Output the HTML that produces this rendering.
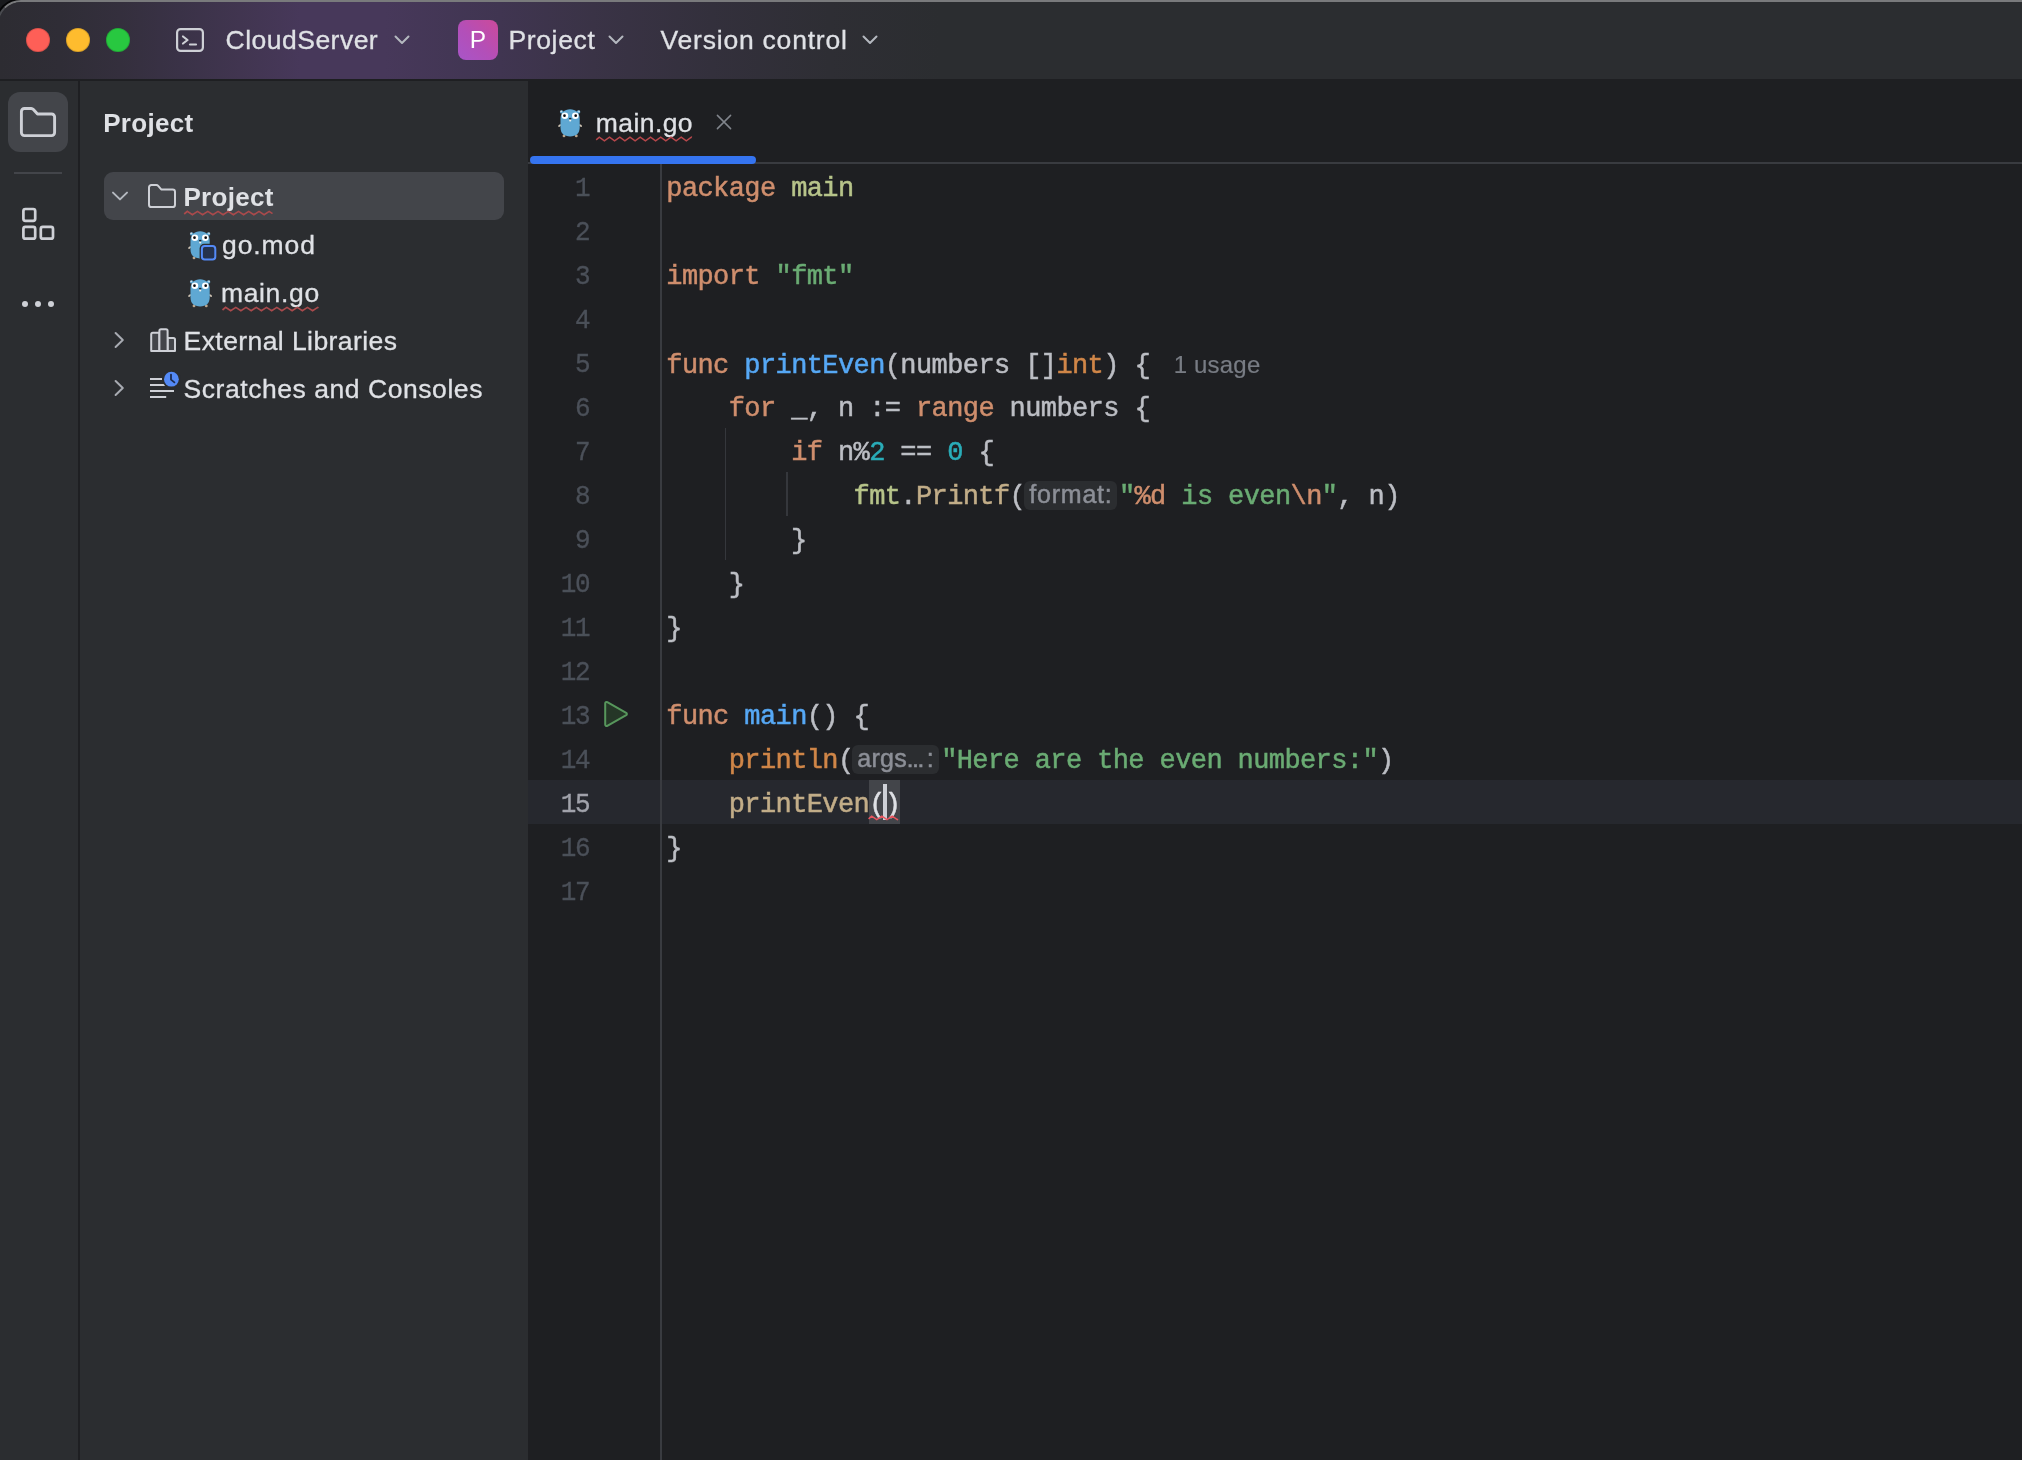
<!DOCTYPE html>
<html lang="en">
<head>
<meta charset="utf-8">
<title>main.go – CloudServer</title>
<style>
*{box-sizing:border-box;margin:0;padding:0}
html,body{width:2022px;height:1460px;overflow:hidden;background:#191a1d}
body{position:relative;font-family:"Liberation Sans",sans-serif;color:#dfe1e5;-webkit-font-smoothing:antialiased}
.abs{position:absolute}
#win{position:absolute;left:-3px;top:0;width:2030px;height:1470px;border:2px solid #797a7c;border-left-color:#4a4b50;border-radius:24px 0 0 0;background:#2b2d30;overflow:hidden;box-shadow:0 0 0 2px #050506}
#inner{position:absolute;left:1px;top:-2px;width:2022px;height:1460px;will-change:transform}
/* title bar */
#title{position:absolute;left:0;top:0;width:2022px;height:79px;background:linear-gradient(90deg,#2d2c32 0px,#2f2d36 60px,#342f3d 120px,#3a3247 180px,#413550 240px,#47385a 300px,#47385a 385px,#403551 500px,#3a3346 593px,#33303c 712px,#2e2e34 830px,#2b2d30 940px,#2b2d30 100%)}
#titleline{position:absolute;left:0;top:79px;width:2022px;height:2px;background:#1e1f22}
.tl{position:absolute;top:28px;width:24px;height:24px;border-radius:50%;box-shadow:inset 0 0 0 1px rgba(0,0,0,.14)}
.tt{position:absolute;top:0;height:80px;line-height:80px;font-size:26.5px;-webkit-text-stroke:0.3px;color:#dfe1e5;white-space:nowrap}
/* left stripe */
#stripe{position:absolute;left:0;top:81px;width:79px;height:1379px;background:#2b2d30}
#stripeline{position:absolute;left:78px;top:81px;width:2px;height:1379px;background:#1e1f22}
#panel{position:absolute;left:80px;top:81px;width:448px;height:1379px;background:#2b2d30}
#editor{position:absolute;left:528px;top:81px;width:1494px;height:1379px;background:#1e1f22}
.row{position:absolute;left:0;height:48px;line-height:48px;font-size:26.5px;-webkit-text-stroke:0.3px;white-space:nowrap;color:#dfe1e5}
.wavy{position:absolute;height:6px}
/* code */
.ln{position:absolute;left:528px;width:61.4px;text-align:right;height:44px;line-height:44px;font-family:"Liberation Mono",monospace;font-size:26px;letter-spacing:-1.3px;-webkit-text-stroke:0.3px;color:#4b5059;transform:scaleY(1.08);transform-origin:50% 73%}
.cl{position:absolute;left:666.3px;height:44px;line-height:44px;font-family:"Liberation Mono",monospace;font-size:27px;letter-spacing:-0.6px;color:#bcbec4;white-space:pre;-webkit-text-stroke:0.5px}
.k{color:#cf8e6d}.f{color:#56a8f5}.s{color:#6aab73}.n{color:#2aacb8}.p{color:#b7c48a}.c{color:#c2ad88}.b{color:#d08648}
.hint{display:inline-block;vertical-align:top;height:28.5px;margin-top:6.5px;line-height:27px;border-radius:6px;background:#2b2d30;color:#8c8f97;font-family:"Liberation Sans",sans-serif;font-size:25px;letter-spacing:0.8px;text-indent:0.8px;text-align:center;white-space:nowrap}
.usage{font-family:"Liberation Sans",sans-serif;font-size:24px;color:#787c84;margin-left:23.6px;letter-spacing:0.2px;-webkit-text-stroke:0.2px}
</style>
</head>
<body>
<div id="win"><div id="inner">

<div id="title"></div>
<div id="titleline"></div>
<div class="tl" style="left:26px;background:#fe5f57"></div>
<div class="tl" style="left:66px;background:#febc2e"></div>
<div class="tl" style="left:106px;background:#28c840"></div>

<!-- terminal icon -->
<svg class="abs" style="left:174px;top:26px" width="32" height="28" viewBox="0 0 32 28" fill="none" stroke="#ced0d6" stroke-width="2.2" stroke-linecap="round" stroke-linejoin="round">
<rect x="3.1" y="3.1" width="25.8" height="21.8" rx="3.5"/>
<path d="M9 10.5 L13.5 14 L9 17.5"/><path d="M16 18.5 H22"/>
</svg>
<div class="tt" id="t1" style="left:225.6px;letter-spacing:0.48px">CloudServer</div>
<svg class="abs chev" style="left:392px;top:32px" width="20" height="16" viewBox="0 0 20 16" fill="none" stroke="#b4b8bf" stroke-width="2" stroke-linecap="round" stroke-linejoin="round"><path d="M3.5 4.5 L10 11 L16.5 4.5"/></svg>

<div class="abs" style="left:458px;top:20px;width:40px;height:40px;border-radius:8px;background:linear-gradient(45deg,#a855c8 0%,#b34fb8 45%,#cc4a9a 100%);color:#fff;font-size:24.5px;line-height:40px;text-align:center">P</div>
<div class="tt" id="t2" style="left:508.4px;letter-spacing:0.66px">Project</div>
<svg class="abs chev" style="left:606px;top:32px" width="20" height="16" viewBox="0 0 20 16" fill="none" stroke="#b4b8bf" stroke-width="2" stroke-linecap="round" stroke-linejoin="round"><path d="M3.5 4.5 L10 11 L16.5 4.5"/></svg>
<div class="tt" id="t3" style="left:660.6px;letter-spacing:0.78px">Version control</div>
<svg class="abs chev" style="left:860px;top:32px" width="20" height="16" viewBox="0 0 20 16" fill="none" stroke="#b4b8bf" stroke-width="2" stroke-linecap="round" stroke-linejoin="round"><path d="M3.5 4.5 L10 11 L16.5 4.5"/></svg>

<div id="stripe"></div>
<div id="stripeline"></div>
<div id="panel"></div>
<div id="editor"></div>

<!-- STRIPE-ICONS -->
<div class="abs" style="left:8px;top:92px;width:60px;height:60px;border-radius:12px;background:#43454a"></div>
<svg class="abs" style="left:18px;top:104px" width="40" height="36" viewBox="0 0 40 36" fill="none" stroke="#ced0d6" stroke-width="2.9" stroke-linejoin="round" stroke-linecap="round">
<path d="M3.4 7.5 a3 3 0 0 1 3 -3 H13.2 a3 3 0 0 1 2.2 1 L19.5 10 H33.6 a3 3 0 0 1 3 3 V28.6 a3 3 0 0 1 -3 3 H6.4 a3 3 0 0 1 -3 -3 Z"/>
</svg>
<div class="abs" style="left:14px;top:172px;width:48px;height:2px;background:#43454a"></div>
<svg class="abs" style="left:18px;top:204px" width="40" height="40" viewBox="0 0 40 40" fill="none" stroke="#ced0d6" stroke-width="2.7" stroke-linejoin="round">
<rect x="5.4" y="5" width="11.8" height="11.8" rx="2"/>
<rect x="5.4" y="22.9" width="11.8" height="11.8" rx="2"/>
<rect x="22.8" y="22.9" width="12.2" height="11.8" rx="2"/>
</svg>
<div class="abs" style="left:22px;top:301px;width:6px;height:6px;border-radius:50%;background:#ced0d6"></div>
<div class="abs" style="left:35px;top:301px;width:6px;height:6px;border-radius:50%;background:#ced0d6"></div>
<div class="abs" style="left:48px;top:301px;width:6px;height:6px;border-radius:50%;background:#ced0d6"></div>
<!-- PANEL -->
<svg width="0" height="0" style="position:absolute"><defs>
<g id="gopher">
<ellipse cx="4.7" cy="3.9" rx="1.8" ry="1.7" fill="#5fa8d3"/><ellipse cx="21.5" cy="3.9" rx="1.8" ry="1.7" fill="#5fa8d3"/>
<ellipse cx="4.2" cy="3.4" rx="0.9" ry="0.8" fill="#d5dde2"/><ellipse cx="22" cy="3.4" rx="0.9" ry="0.8" fill="#d5dde2"/>
<ellipse cx="2.7" cy="17.6" rx="1.7" ry="1" transform="rotate(-40 2.7 17.6)" fill="#cfc4b4"/>
<ellipse cx="23.5" cy="17.6" rx="1.7" ry="1" transform="rotate(40 23.5 17.6)" fill="#cfc4b4"/>
<ellipse cx="7" cy="27.9" rx="1.4" ry="1.3" fill="#bfa88c"/><ellipse cx="19.3" cy="27.9" rx="1.4" ry="1.3" fill="#bfa88c"/>
<path d="M3.5 11 C3.5 4.8 7.4 1.2 13.1 1.2 C18.8 1.2 22.7 4.8 22.7 11 V19.5 C22.7 25.4 19 28.4 13.1 28.4 C7.2 28.4 3.5 25.4 3.5 19.5 Z" fill="#5fa8d3"/>
<circle cx="7.9" cy="7.7" r="3.3" fill="#fff"/><circle cx="18.3" cy="7.7" r="3.3" fill="#fff"/>
<circle cx="7.5" cy="7.7" r="1.35" fill="#0b0b0d"/><circle cx="18.7" cy="7.7" r="1.35" fill="#0b0b0d"/>
<rect x="12.2" y="11.2" width="2" height="2.4" rx="0.8" fill="#f1f1ee"/>
<ellipse cx="13.2" cy="10.6" rx="1.3" ry="0.9" fill="#17222b"/>
</g></defs></svg>

<div class="row" id="hdr" style="left:103.2px;top:99px;font-weight:bold;font-size:26px;-webkit-text-stroke:0;letter-spacing:0.3px">Project</div>
<div class="abs" style="left:104px;top:172px;width:400px;height:48px;border-radius:9px;background:#43454a"></div>
<svg class="abs" style="left:110px;top:188px" width="20" height="16" viewBox="0 0 20 16" fill="none" stroke="#b4b8bf" stroke-width="2" stroke-linecap="round" stroke-linejoin="round"><path d="M3 4.6 L10 11.4 L17 4.6"/></svg>
<svg class="abs" style="left:146px;top:182px" width="32" height="28" viewBox="0 0 32 28" fill="none" stroke="#ced0d6" stroke-width="2" stroke-linejoin="round">
<path d="M3 5.5 a2.4 2.4 0 0 1 2.4 -2.4 H10.4 a2.4 2.4 0 0 1 1.8 0.8 L15.2 7.4 H26.6 a2.4 2.4 0 0 1 2.4 2.4 V22.7 a2.4 2.4 0 0 1 -2.4 2.4 H5.4 a2.4 2.4 0 0 1 -2.4 -2.4 Z"/></svg>
<div class="row" id="r1" style="left:183.4px;top:172.5px;font-weight:bold;font-size:26px;-webkit-text-stroke:0;letter-spacing:0.3px">Project</div>
<svg class="abs" style="left:182px;top:208px" width="94" height="10" fill="none" stroke="#a94a4c" stroke-width="1.7" stroke-linejoin="miter"><polyline points="2.2,6.0 5.3,3.4 10.4,6.8 15.5,3.4 20.6,6.8 25.8,3.4 30.9,6.8 36.0,3.4 41.1,6.8 46.2,3.4 51.4,6.8 56.5,3.4 61.6,6.8 66.7,3.4 71.8,6.8 77.0,3.4 82.1,6.8 87.2,3.4 90.5,5.6"/></svg>
<svg class="abs" style="left:187px;top:230px" width="32" height="32" viewBox="0 0 32 32"><use href="#gopher"/>
<rect x="12.6" y="13.8" width="18" height="18" rx="4.6" fill="#2b2d30"/>
<rect x="14.9" y="16.1" width="13.4" height="13.4" rx="2.8" fill="#25324d" stroke="#548af7" stroke-width="2"/></svg>
<div class="row" id="r2" style="left:222px;top:220.5px;letter-spacing:0.92px">go.mod</div>
<svg class="abs" style="left:187px;top:277.6px" width="32" height="32" viewBox="0 0 32 32"><use href="#gopher"/></svg>
<div class="row" id="r3" style="left:221px;top:268.5px;letter-spacing:0.64px">main.go</div>
<svg class="abs" style="left:220px;top:304px" width="102" height="10" fill="none" stroke="#a94a4c" stroke-width="1.7" stroke-linejoin="miter"><polyline points="2.5,6.0 5.6,3.4 10.7,6.8 15.8,3.4 20.9,6.8 26.1,3.4 31.2,6.8 36.3,3.4 41.4,6.8 46.5,3.4 51.7,6.8 56.8,3.4 61.9,6.8 67.0,3.4 72.1,6.8 77.3,3.4 82.4,6.8 87.5,3.4 92.6,6.8 97.7,3.4 98.5,3.9"/></svg><svg class="abs" style="left:111px;top:329px" width="16" height="22" viewBox="0 0 16 22" fill="none" stroke="#a8abb2" stroke-width="2" stroke-linecap="round" stroke-linejoin="round"><path d="M4.6 4 L11.8 11 L4.6 18"/></svg>
<svg class="abs" style="left:147px;top:325px" width="32" height="30" viewBox="0 0 32 30" fill="#43454a" stroke="#ced0d6" stroke-width="2" stroke-linejoin="round">
<path d="M4.2 26 V9.4 a1.6 1.6 0 0 1 1.6 -1.6 H12.4 V26 Z"/>
<path d="M20.6 26 V12.9 H26.4 a1.6 1.6 0 0 1 1.6 1.6 V26 Z"/>
<path d="M12.4 26 V5.8 a1.6 1.6 0 0 1 1.6 -1.6 H19 a1.6 1.6 0 0 1 1.6 1.6 V26 Z"/>
<path d="M4.2 26 H28" />
</svg>
<div class="row" id="r4" style="left:183.6px;top:316.5px;letter-spacing:0.42px">External Libraries</div>
<svg class="abs" style="left:111px;top:377px" width="16" height="22" viewBox="0 0 16 22" fill="none" stroke="#a8abb2" stroke-width="2" stroke-linecap="round" stroke-linejoin="round"><path d="M4.6 4 L11.8 11 L4.6 18"/></svg>
<svg class="abs" style="left:147px;top:370px" width="34" height="32" viewBox="0 0 34 32">
<g stroke="#ced0d6" stroke-width="2" fill="none"><path d="M3 9 H15"/><path d="M3 15 H18"/><path d="M3 21 H27"/><path d="M3 27 H19.2"/></g>
<circle cx="24.4" cy="9.2" r="9.2" fill="#2b2d30"/>
<circle cx="24.4" cy="9.2" r="7.4" fill="#548af7"/>
<path d="M24 4.6 V9.6 L27.4 12.4" fill="none" stroke="#1c2b4e" stroke-width="1.8" stroke-linecap="round" stroke-linejoin="round"/>
</svg>
<div class="row" id="r5" style="left:183.6px;top:364.5px;letter-spacing:0.55px">Scratches and Consoles</div>
<!-- EDITOR -->
<svg class="abs" style="left:556.8px;top:107.8px" width="32" height="32" viewBox="0 0 32 32"><use href="#gopher"/></svg>
<div class="row" id="tab" style="left:595.7px;top:99px;letter-spacing:0.44px">main.go</div>
<svg class="abs" style="left:594px;top:134px" width="101" height="10" fill="none" stroke="#b5474b" stroke-width="1.5" stroke-linejoin="miter"><polyline points="2.2,5.9 5.3,3.2 10.4,6.8 15.5,3.2 20.6,6.8 25.8,3.2 30.9,6.8 36.0,3.2 41.1,6.8 46.2,3.2 51.4,6.8 56.5,3.2 61.6,6.8 66.7,3.2 71.8,6.8 77.0,3.2 82.1,6.8 87.2,3.2 92.3,6.8 97.4,3.2 97.9,3.5"/></svg>
<svg class="abs" style="left:714px;top:112px" width="20" height="20" viewBox="0 0 20 20" fill="none" stroke="#81858c" stroke-width="1.5" stroke-linecap="round"><path d="M3.4 3.4 L16.6 16.6 M16.6 3.4 L3.4 16.6"/></svg>
<div class="abs" style="left:528px;top:162px;width:1494px;height:1.5px;background:#393b40"></div>
<div class="abs" style="left:530px;top:156px;width:226px;height:8px;border-radius:4px;background:#3574f0"></div>
<div class="abs" style="left:528px;top:780px;width:1494px;height:44px;background:#26282e"></div>
<div class="abs" style="left:869.1px;top:780px;width:31.2px;height:44px;background:#43454a"></div>
<div class="abs" style="left:660.4px;top:164px;width:1.5px;height:1296px;background:#393b40"></div>
<div class="abs" style="left:724.5px;top:428px;width:1.5px;height:132px;background:#35373c"></div>
<div class="abs" style="left:786.3px;top:472px;width:1.5px;height:44px;background:#35373c"></div>
<div class="ln" style="top:166.5px">1</div>
<div class="ln" style="top:210.5px">2</div>
<div class="ln" style="top:254.5px">3</div>
<div class="ln" style="top:298.5px">4</div>
<div class="ln" style="top:342.5px">5</div>
<div class="ln" style="top:386.5px">6</div>
<div class="ln" style="top:430.5px">7</div>
<div class="ln" style="top:474.5px">8</div>
<div class="ln" style="top:518.5px">9</div>
<div class="ln" style="top:562.5px">10</div>
<div class="ln" style="top:606.5px">11</div>
<div class="ln" style="top:650.5px">12</div>
<div class="ln" style="top:694.5px">13</div>
<div class="ln" style="top:738.5px">14</div>
<div class="ln" style="top:782.5px;color:#a1a3ab">15</div>
<div class="ln" style="top:826.5px">16</div>
<div class="ln" style="top:870.5px">17</div>
<svg class="abs" style="left:600px;top:698px" width="32" height="32" viewBox="0 0 32 32" fill="#253627" stroke="#57965c" stroke-width="2" stroke-linejoin="round"><path d="M5.2 5.4 V26.6 a1.4 1.4 0 0 0 2.1 1.2 L26.2 17.2 a1.4 1.4 0 0 0 0 -2.4 L7.3 4.2 a1.4 1.4 0 0 0 -2.1 1.2 Z"/></svg>
<div class="cl" id="L1" style="top:166.5px"><span class="k">package</span> <span class="p">main</span></div>
<div class="cl" id="L3" style="top:254.5px"><span class="k">import</span> <span class="s">"fmt"</span></div>
<div class="cl" id="L5" style="top:342.5px"><span class="k">func</span> <span class="f">printEven</span>(numbers []<span class="b">int</span>) {<span class="usage">1 usage</span></div>
<div class="cl" id="L6" style="top:386.5px">    <span class="k">for</span> _, n := <span class="k">range</span> numbers {</div>
<div class="cl" id="L7" style="top:430.5px">        <span class="k">if</span> n%<span class="n">2</span> == <span class="n">0</span> {</div>
<div class="cl" id="L8" style="top:474.5px">            <span class="p">fmt</span>.<span class="c">Printf</span>(<span class="hint" style="margin-left:-1px;width:92.7px;margin-right:2px">format:</span><span class="s">"</span><span class="k">%d</span><span class="s"> is even</span><span class="k">\n</span><span class="s">"</span>, n)</div>
<div class="cl" id="L9" style="top:518.5px">        }</div>
<div class="cl" id="L10" style="top:562.5px">    }</div>
<div class="cl" id="L11" style="top:606.5px">}</div>
<div class="cl" id="L13" style="top:694.5px"><span class="k">func</span> <span class="f">main</span>() {</div>
<div class="cl" id="L14" style="top:738.5px">    <span class="b">println</span>(<span class="hint" style="margin-left:-2px;width:87.6px;margin-right:2px;text-align:left;padding-left:4.9px;letter-spacing:0.3px">args<span style="font-size:17px;font-weight:bold;letter-spacing:0;margin:0 2.6px 0 0">…</span>:</span><span class="s">"Here are the even numbers:"</span>)</div>
<div class="cl" id="L15" style="top:782.5px">    <span class="c">printEven</span><span style="color:#dfe1e5">()</span></div>
<div class="cl" id="L16" style="top:826.5px">}</div>
<div class="abs" style="left:883.3px;top:784px;width:3.6px;height:36px;background:#ced0d6"></div>
<svg class="abs" style="left:866px;top:813px" width="35" height="10" fill="none" stroke="#e8555f" stroke-width="1.6" stroke-linejoin="miter"><polyline points="2.6,5.8 5.7,3.2 10.8,6.6 15.9,3.2 21.0,6.6 26.2,3.2 31.3,6.6 32.0,6.1"/></svg>

</div></div>
</body>
</html>
